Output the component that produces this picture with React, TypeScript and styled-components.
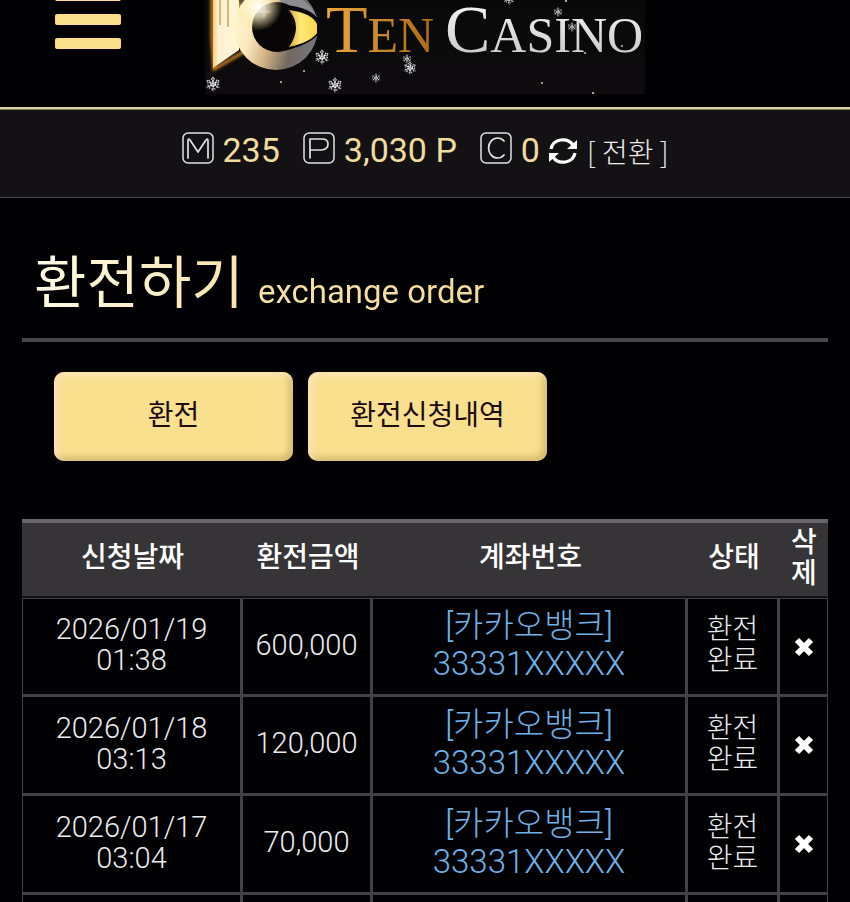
import styled, { createGlobalStyle } from "styled-components";

interface IOrder {
  date: string;
  time: string;
  amount: string;
  bank: string;
  account: string;
}

interface ICol {
  width?: number;
}

const ORDERS: IOrder[] = [
  { date: "2026/01/19", time: "01:38", amount: "600,000", bank: "[카카오뱅크]", account: "33331XXXXX" },
  { date: "2026/01/18", time: "03:13", amount: "120,000", bank: "[카카오뱅크]", account: "33331XXXXX" },
  { date: "2026/01/17", time: "03:04", amount: "70,000", bank: "[카카오뱅크]", account: "33331XXXXX" },
];

const FLAKES = [
  [8, 84, 8],
  [117, 57, 8],
  [130, 85, 8],
  [171, 78, 5],
  [202, 59, 5],
  [205, 68, 7],
  [304, -1, 6],
  [353, 12, 5],
  [367, 27, 5],
];

const DOTS = [
  [76, 82],
  [99, 71],
  [337, 83],
  [380, 53],
  [388, 93],
  [417, 46],
  [361, 1],
];

const Logo = () => (
  <svg width="440" height="94" viewBox="0 0 440 94" role="img" aria-label="Ten Casino">
    <defs>
      <linearGradient id="bg" x1="0" y1="0" x2="0" y2="1">
        <stop offset="0" stopColor="#070907" />
        <stop offset="1" stopColor="#0f0b0f" />
      </linearGradient>
      <linearGradient id="one" x1="0" y1="0" x2="1" y2="0">
        <stop offset="0" stopColor="#f7c878" />
        <stop offset="0.2" stopColor="#fff0d2" />
        <stop offset="1" stopColor="#fff8d8" />
      </linearGradient>
      <linearGradient id="ring" x1="0" y1="0.3" x2="1" y2="0.6">
        <stop offset="0" stopColor="#fff6cf" />
        <stop offset="0.25" stopColor="#fdeabf" />
        <stop offset="0.5" stopColor="#cfae82" />
        <stop offset="0.75" stopColor="#716860" />
        <stop offset="1" stopColor="#77767a" />
      </linearGradient>
      <linearGradient id="eye" x1="0" y1="0" x2="1" y2="0">
        <stop offset="0" stopColor="#d9a93a" />
        <stop offset="0.4" stopColor="#ffe878" />
        <stop offset="1" stopColor="#f9d549" />
      </linearGradient>
      <linearGradient id="ten" x1="0" y1="0" x2="1" y2="0">
        <stop offset="0" stopColor="#e9a83c" />
        <stop offset="1" stopColor="#a96a12" />
      </linearGradient>
      <linearGradient id="casino" x1="0" y1="0" x2="0" y2="1">
        <stop offset="0" stopColor="#ffffff" />
        <stop offset="1" stopColor="#c4c0c4" />
      </linearGradient>
      <radialGradient id="flare">
        <stop offset="0" stopColor="#ffffff" />
        <stop offset="0.45" stopColor="#fff6cf" stopOpacity="0.7" />
        <stop offset="1" stopColor="#ffdf90" stopOpacity="0" />
      </radialGradient>
      <filter id="glow" x="-20%" y="-20%" width="140%" height="140%">
        <feGaussianBlur stdDeviation="1.5" />
      </filter>
      <g id="flake" fill="none" stroke="#c9c9cd" strokeWidth="0.2">
        <path d="M0-.9V.9M-.78-.45L.78.45M.78-.45L-.78.45" strokeDasharray="0.22 0.12" />
        <circle r="0.65" strokeDasharray="0.16 0.18" />
        <circle r="0.32" stroke="#fff" strokeDasharray="0.2 0.14" />
      </g>
    </defs>
    <rect width="440" height="94" fill="url(#bg)" />
    <path d="M7-4H26L42 14V50L9 69L7 36Z" fill="none" stroke="#d98a24" strokeWidth="3" filter="url(#glow)" />
    <path d="M8-4H34V50L8 68Z" fill="url(#one)" />
    <path d="M15 0V25M23 0V27" stroke="#c79a48" strokeWidth="1.4" />
    <circle cx="71" cy="28" r="42" fill="url(#ring)" />
    <path d="M62-12Q100-8 112 17L84 9Z" fill="#8d8c93" />
    <circle cx="72" cy="27" r="25" fill="#070506" />
    <path d="M82 5Q106 8 113 19V35Q103 45 79 51Z" fill="#070506" />
    <path d="M84 10Q107 13 112 24V33Q106 42 84 47Q98 27 84 10Z" fill="url(#eye)" />
    <circle cx="53" cy="7" r="24" fill="url(#flare)" />
    <path d="M58 10L60 5L61 10L67 12L61 13L59 19L57 13L50 12Z" fill="#fff6d4" opacity="0.4" />
    <LogoText x="121" y="52" fill="url(#ten)">
      T<tspan fontSize="50">EN</tspan>
    </LogoText>
    <LogoText x="240" y="52" fill="url(#casino)">
      C<tspan fontSize="50">ASINO</tspan>
    </LogoText>
    {FLAKES.map(([x, y, r]) => (
      <use key={`${x}-${y}`} href="#flake" transform={`translate(${x} ${y}) scale(${r})`} />
    ))}
    {DOTS.map(([x, y]) => (
      <circle key={`${x}-${y}`} cx={x} cy={y} r="1.1" fill="#b9b9b9" />
    ))}
  </svg>
);

const LetterIcon = ({ d }: { d: string }) => (
  <svg width="32" height="32" viewBox="0 0 32 32" fill="none" stroke="#e2e2e4" aria-hidden="true">
    <rect x="1" y="1" width="30" height="30" rx="5" strokeWidth="1.5" />
    <path d={d} strokeWidth="1.7" strokeLinejoin="round" strokeLinecap="round" />
  </svg>
);

const RefreshIcon = () => (
  <svg width="28" height="28" viewBox="0 0 28 28" fill="none" stroke="#fff" strokeWidth="3.2" aria-hidden="true">
    <path d="M2 12A12 11 0 0 1 24 8M26 16A12 11 0 0 1 4 20" />
    <path d="M28 3V12H18ZM0 25V16H10Z" fill="#fff" stroke="none" />
  </svg>
);

const CloseIcon = () => (
  <svg width="20" height="20" viewBox="0 0 20 20" stroke="#fff" strokeWidth="6" aria-hidden="true">
    <path d="M3 3L17 17M17 3L3 17" />
  </svg>
);

const App = () => {
  return (
    <>
      <GlobalStyle />
      <Page>
        <Header>
          <MenuButton type="button" aria-label="menu">
            <MenuBar />
            <MenuBar />
            <MenuBar />
          </MenuButton>
          <Logo />
        </Header>
        <BalanceBar>
          <Balance>
            <LetterIcon d="M6 26V9Q6 6 8 8L16 20L24 8Q26 6 26 9V26" />
            <Amount>235</Amount>
          </Balance>
          <Balance>
            <LetterIcon d="M7 26V7H19Q25 7 25 12T19 18H7" />
            <Amount>3,030 P</Amount>
          </Balance>
          <Balance>
            <LetterIcon d="M24 9A9 10 0 1 0 24 23" />
            <Amount>0</Amount>
            <ConvertButton type="button">
              <RefreshIcon />[ 전환 ]
            </ConvertButton>
          </Balance>
        </BalanceBar>
        <Content>
          <TitleWrap>
            <Title>
              환전하기 <SubTitle>exchange order</SubTitle>
            </Title>
          </TitleWrap>
          <TabList>
            <TabButton type="button">환전</TabButton>
            <TabButton type="button">환전신청내역</TabButton>
          </TabList>
          <OrderTable>
            <colgroup>
              <Col width={221} />
              <Col width={130} />
              <Col />
              <Col width={92} />
              <Col width={48} />
            </colgroup>
            <thead>
              <tr>
                <HeadCell scope="col">신청날짜</HeadCell>
                <HeadCell scope="col">환전금액</HeadCell>
                <HeadCell scope="col">계좌번호</HeadCell>
                <HeadCell scope="col">상태</HeadCell>
                <HeadCell scope="col">삭제</HeadCell>
              </tr>
            </thead>
            <tbody>
              {ORDERS.map((order) => (
                <tr key={order.date}>
                  <Cell>
                    {order.date}
                    <br />
                    {order.time}
                  </Cell>
                  <Cell>{order.amount}</Cell>
                  <AccountCell>
                    {order.bank}
                    <br />
                    {order.account}
                  </AccountCell>
                  <StatusCell>
                    환전
                    <br />
                    완료
                  </StatusCell>
                  <Cell>
                    <DeleteButton type="button" aria-label="삭제">
                      <CloseIcon />
                    </DeleteButton>
                  </Cell>
                </tr>
              ))}
              <tr>
                <Cell />
                <Cell />
                <AccountCell />
                <StatusCell />
                <Cell />
              </tr>
            </tbody>
          </OrderTable>
        </Content>
      </Page>
    </>
  );
};

export default App;

const GlobalStyle = createGlobalStyle`
  * {
    box-sizing: border-box;
  }

  body {
    margin: 0;
    background: #010002;
    color: #ececee;
    font-family: Roboto, "Noto Sans CJK KR", sans-serif;
  }

  button {
    padding: 0;
    border: 0;
    background: none;
    color: inherit;
    font-family: inherit;
    cursor: pointer;
  }
`;

const Page = styled.div`
  height: 100vh;
  overflow: hidden;
`;

const Header = styled.header`
  display: grid;
  grid-template-columns: 1fr auto 1fr;
  align-items: start;
  height: 110px;
  border-bottom: 3px ridge #d8cf9f;
`;

const LogoText = styled.text`
  font-family: "Liberation Serif", serif;
  font-size: 68px;
`;

const MenuButton = styled.button`
  display: flex;
  flex-direction: column;
  gap: 13px;
  width: 66px;
  margin-top: -10px;
  margin-left: 55px;
`;

const MenuBar = styled.span`
  width: 100%;
  height: 11px;
  border-radius: 2px;
  background: #f9df8b;
`;

const BalanceBar = styled.div`
  display: flex;
  justify-content: center;
  gap: 23px;
  height: 88px;
  padding-top: 16px;
  border-bottom: 1px solid #48464a;
  background: #131114;
`;

const Balance = styled.div`
  display: flex;
  align-items: center;
  gap: 9px;
  height: 44px;
`;

const Amount = styled.span`
  padding-top: 4px;
  color: #f0dc9c;
  font-size: 34px;
  line-height: 44px;
`;

const ConvertButton = styled.button`
  display: flex;
  align-items: center;
  gap: 10px;
  padding-top: 6px;
  font-family: "Noto Sans CJK KR", sans-serif;
  font-size: 28px;
  font-weight: 300;
  line-height: 44px;
`;

const Content = styled.main`
  padding: 0 22px;
`;

const TitleWrap = styled.div`
  height: 144px;
  padding: 46px 12px 0;
  border-bottom: 4px solid #4a484b;
`;

const Title = styled.h1`
  width: fit-content;
  margin: 0;
  font-size: 57px;
  font-weight: 400;
  line-height: 80px;
  background: linear-gradient(90deg, #fffbe6, #f6e2a6 50%, #f3dc9c);
  background-clip: text;
  color: transparent;
`;

const SubTitle = styled.small`
  font-size: 33px;
`;

const TabList = styled.div`
  display: flex;
  gap: 15px;
  padding: 30px 32px 58px;
`;

const TabButton = styled.button`
  width: 239px;
  height: 89px;
  padding-bottom: 8px;
  border-radius: 10px;
  background: #f8e08f;
  box-shadow:
    inset 4px 4px 6px rgba(255, 228, 190, 0.8),
    inset -4px -4px 6px rgba(190, 160, 90, 0.6);
  color: #1c0b10;
  font-size: 28px;
`;

const OrderTable = styled.table`
  width: 100%;
  table-layout: fixed;
  border-collapse: separate;
  border-spacing: 0;
  border-top: 4px solid #68666a;
`;

const Col = styled.col<ICol>`
  width: ${(props) => (props.width ? `${props.width}px` : "auto")};
`;

const HeadCell = styled.th`
  height: 75px;
  padding: 0 10px 4px;
  border-bottom: 2px solid #111012;
  background: #363437;
  color: #fff;
  font-size: 28px;
  font-weight: 500;
  line-height: 31px;
`;

const Cell = styled.td`
  height: 99px;
  padding: 0 0 3px;
  border-right: 3px solid #434144;
  border-bottom: 3px solid #434144;
  font-size: 29px;
  font-weight: 300;
  line-height: 31px;
  text-align: center;

  &:first-child {
    border-left: 1px solid #434144;
  }

  &:last-child {
    border-right-width: 1px;
  }

  tr:first-child > & {
    border-top: 1px solid #434144;
  }
`;

const AccountCell = styled(Cell)`
  color: #6cb2e8;
  font-size: 33px;
  line-height: 38px;
`;

const StatusCell = styled(Cell)`
  font-size: 28px;
`;

const DeleteButton = styled.button`
  display: block;
  height: 20px;
  margin: 3px auto 0;
`;
